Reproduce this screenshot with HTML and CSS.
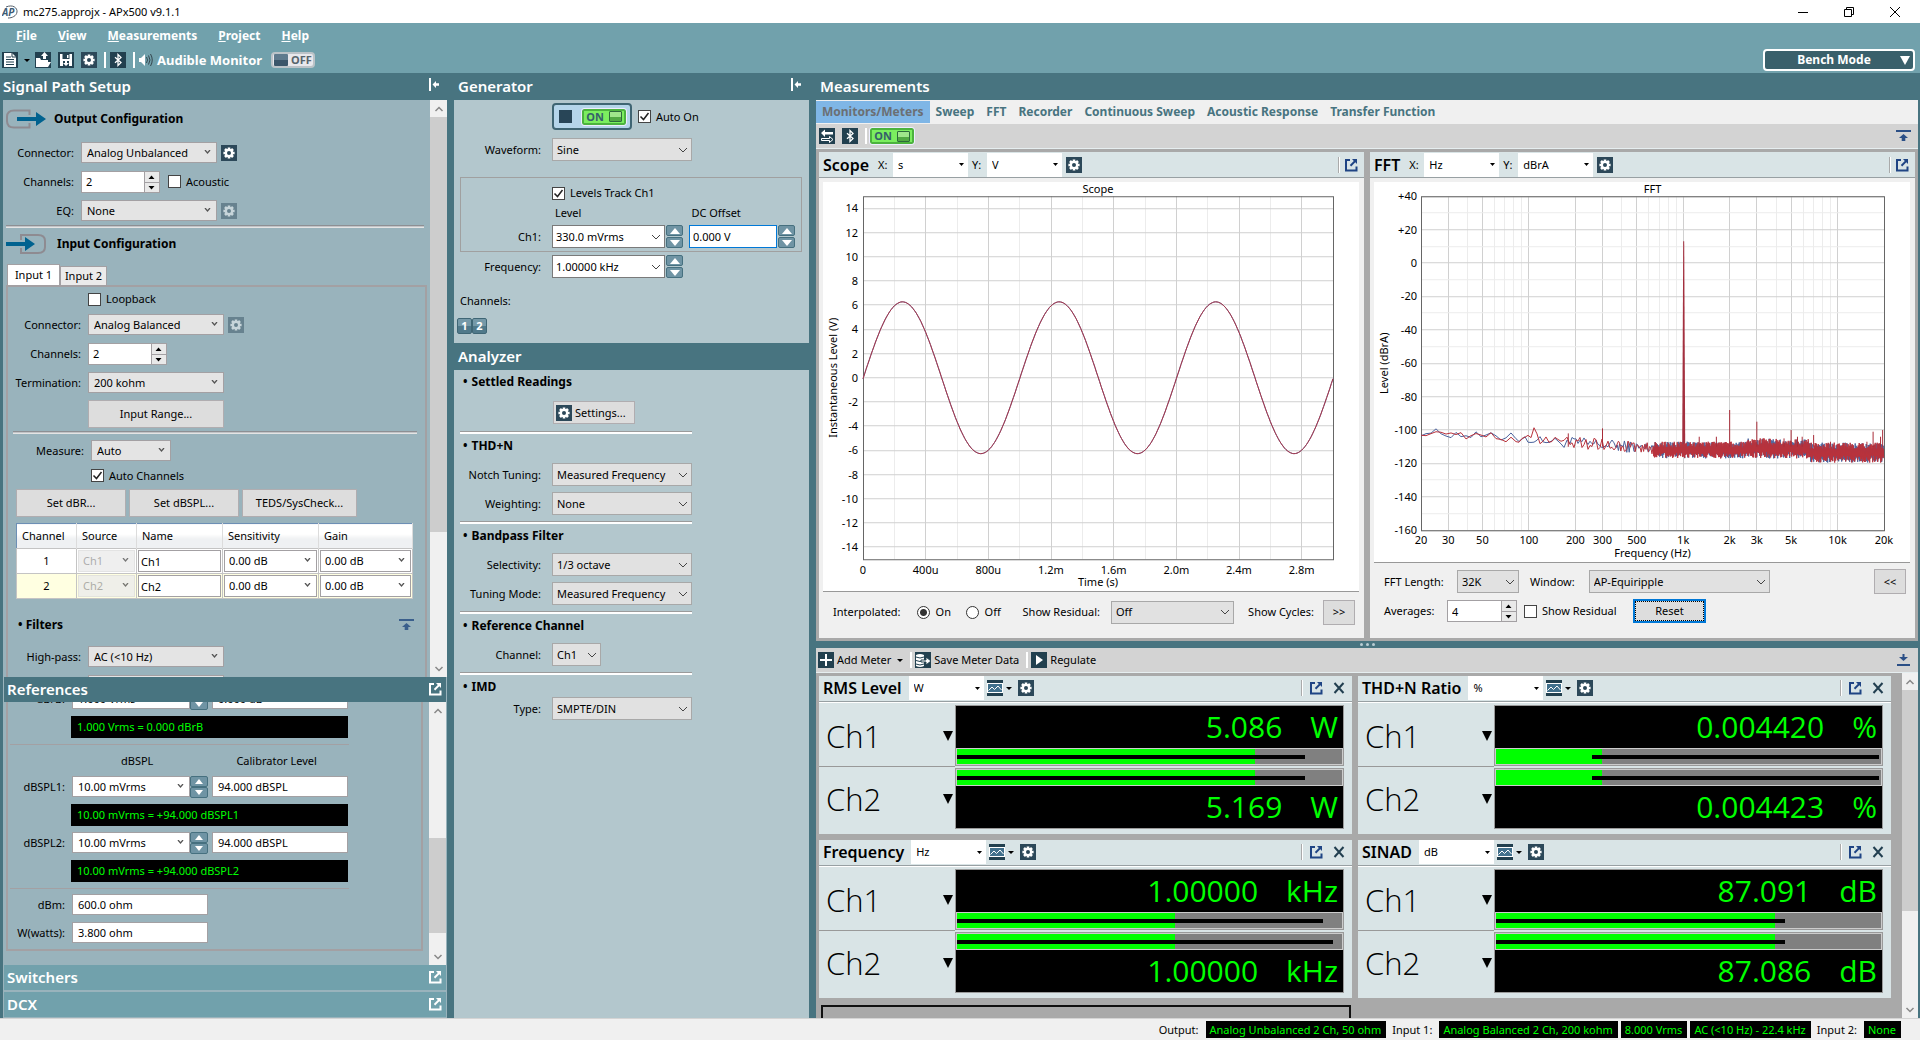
FILE: index.html
```html
<!DOCTYPE html>
<html lang="en">
<head>
<meta charset="utf-8">
<title>mc275.approjx - APx500 v9.1.1</title>
<link rel="stylesheet" href="styles.css">
</head>
<body>
<svg class="defs" aria-hidden="true">
  <symbol id="gear" viewBox="0 0 16 16"><rect width="16" height="16" fill="#2c4859"/><g stroke="#fff" stroke-width="2.6"><path d="M8 2.4v11.2M2.4 8h11.2M4 4l8 8M12 4l-8 8"/></g><circle cx="8" cy="8" r="4.2" fill="#fff"/><circle cx="8" cy="8" r="2" fill="#2c4859"/></symbol>
  <symbol id="bt" viewBox="0 0 16 16"><rect width="16" height="16" fill="#22404f"/><path d="M5 5.2l6 5.4L8 13.500V2.500l3 2.900L5 10.800" fill="none" stroke="#fff" stroke-width="1.300"/></symbol>
  <symbol id="pop" viewBox="0 0 14 14"><path d="M6 2H2v10.500h10.500V8.500" fill="none" stroke="currentColor" stroke-width="2"/><path d="M8 1h5v5l-1.700-1.700L7.200 8.400 5.800 7l4-4z" fill="currentColor"/></symbol>
  <symbol id="side" viewBox="0 0 12 14"><path d="M1 0h2v13H1zM4.500 6.500L8 3v2.300h3v2.500H8V10z" fill="currentColor"/></symbol>
  <symbol id="rollup" viewBox="0 0 16 14"><path d="M0 1h15v2H0zM7.500 5l4.500 4H9.300v3H5.700V9H3z" fill="currentColor"/></symbol>
  <symbol id="rolldown" viewBox="0 0 16 14"><path d="M1 11h13v2H1zM6.500 1h2v3H12l-4.500 4L3 4h3.500z" fill="currentColor"/></symbol>
  <symbol id="close" viewBox="0 0 12 12"><path d="M1.500 1l9 10M10.500 1l-9 10" stroke="#223f50" stroke-width="2"/></symbol>
  <symbol id="graph" viewBox="0 0 16 16"><rect width="16" height="16" fill="#22404f"/><rect x="0" y="3" width="16" height="10" fill="#fff"/><rect x="1" y="4" width="14" height="8" fill="#41708c"/><path d="M1.500 10.500l3.500-3.500 2.500 2.500L11 6l3.500 4" fill="none" stroke="#fff"/></symbol>
</svg>

<header class="titlebar">
  <svg class="logo" viewBox="0 0 16 16"><path d="M4 3C11 0 15.500 4 15 8s-5 6-9 6" fill="none" stroke="#56606a"/><text x="0" y="12" class="logo-text">AP</text></svg>
  <span class="grow">mc275.approjx - APx500 v9.1.1</span>
  <button class="win" aria-label="Minimize"><svg viewBox="0 0 12 12"><path d="M1 6.500h10" stroke="#000"/></svg></button>
  <button class="win" aria-label="Restore"><svg viewBox="0 0 12 12"><path d="M1.500 3.500h7v7h-7zM3.500 3.500v-2h7v7h-2" fill="none" stroke="#000"/></svg></button>
  <button class="win" aria-label="Close"><svg viewBox="0 0 12 12"><path d="M1 1l10 10M11 1L1 11" stroke="#000"/></svg></button>
</header>

<div class="topbar">
  <nav class="menu"><a href="#"><u>F</u>ile</a><a href="#"><u>V</u>iew</a><a href="#"><u>M</u>easurements</a><a href="#"><u>P</u>roject</a><a href="#"><u>H</u>elp</a></nav>
  <div class="toolbar">
    <button class="ic" aria-label="New"><svg viewBox="0 0 16 16"><path d="M0 0h16v16H0z" fill="#22404f"/><path d="M2 1h8l4 4v10H2z" fill="#fff"/><path d="M10 1v4h4" fill="none" stroke="#22404f"/><path d="M4 5h5M4 7.500h8M4 10h8M4 12.500h8" stroke="#22404f"/></svg></button>
    <i class="tri"></i>
    <button class="ic" aria-label="Open"><svg viewBox="0 0 16 16"><path d="M0 0h16v16H0z" fill="#22404f"/><path d="M1 15V6h4l1 2h7v2h3l-3 5z" fill="#fff"/><path d="M8 7V4H6l3.500-4L13 4h-2v3z" fill="#fff"/></svg></button>
    <button class="ic" aria-label="Save"><svg viewBox="0 0 16 16"><path d="M0 0h16v16H0z" fill="#22404f"/><path d="M2 2h12v12H2z" fill="#fff"/><path d="M4.500 2h7v5h-7zM5 9h6v5H5z" fill="#22404f"/><path d="M9 3h1.500v3H9zM7 8h2v3h2l-3 3-3-3h2z" fill="#fff"/></svg></button>
    <button class="ic" aria-label="Settings"><svg><use href="#gear"/></svg></button>
    <i class="sep"></i>
    <button class="ic" aria-label="Bluetooth"><svg><use href="#bt"/></svg></button>
    <i class="sep"></i>
    <svg class="speaker" viewBox="0 0 14 14"><path d="M0 5h2l4-4v12L2 9H0z" fill="#fff"/><path d="M7.500 4q2 3 0 6M9.500 2.500q3 4.500 0 9M11.500 1q3.500 6 0 12" fill="none" stroke="#35464e"/></svg>
    <b class="audible">Audible Monitor</b>
    <button class="switch off"><i></i>OFF</button>
    <button class="bench"><span>Bench Mode</span><i></i></button>
  </div>
</div>

<main class="cols">
  <section class="col left">
    <h2 class="bar">Signal Path Setup<svg class="sideicon"><use href="#side"/></svg></h2>
    <div class="scroller path">
      <div class="content">
        <h3 class="cfg"><svg viewBox="0 0 40 20"><path d="M23.500 6V1.500H8Q1 1.500 1 8v4q0 6.500 7 6.500h15.500V14" fill="none" stroke="#8e8b91" stroke-width="2"/><path d="M11 8h19V3l10 7-10 7v-5H11z" fill="#00628f"/></svg>Output Configuration</h3>
        <div class="rows out">
          <label for="oc">Connector:</label><div class="r"><select id="oc" class="w136"><option>Analog Unbalanced</option></select><button class="ic" aria-label="Settings"><svg><use href="#gear"/></svg></button></div>
          <label for="och">Channels:</label><div class="r"><span class="num"><input id="och" value="2"><i class="ud"></i></span><input type="checkbox" id="ac"><label for="ac">Acoustic</label></div>
          <label for="eq">EQ:</label><div class="r"><select id="eq" class="w136"><option>None</option></select><button class="ic dim" aria-label="EQ settings" disabled><svg><use href="#gear"/></svg></button></div>
        </div>
        <hr class="rule">
        <h3 class="cfg in"><svg viewBox="0 0 40 20"><path d="M15 6V1h17q7 0 7 6v6q0 6-7 6H15v-5" fill="none" stroke="#8e8b91" stroke-width="2"/><path d="M0 8h19V3l10 7-10 7v-5H0z" fill="#00628f"/></svg>Input Configuration</h3>
        <div class="tabs"><button class="on">Input 1</button><button>Input 2</button></div>
        <div class="tabbox">
          <div class="rows inp">
            <span class="short"></span><div class="r short"><input type="checkbox" id="lb"><label for="lb">Loopback</label></div>
            <label for="ic">Connector:</label><div class="r"><select id="ic" class="w136"><option>Analog Balanced</option></select><button class="ic dim" aria-label="Input settings" disabled><svg><use href="#gear"/></svg></button></div>
            <label for="ich">Channels:</label><div class="r"><span class="num"><input id="ich" value="2"><i class="ud"></i></span></div>
            <label for="te">Termination:</label><div class="r"><select id="te" class="w136"><option>200 kohm</option></select></div>
            <span></span><button class="btn w136">Input Range...</button>
          </div>
          <hr class="rule inner">
          <div class="rows inp meas">
            <label for="me">Measure:</label><div class="r"><select id="me" class="w80"><option>Auto</option></select></div>
            <span></span><div class="r"><input type="checkbox" id="auc" checked><label for="auc">Auto Channels</label></div>
          </div>
          <div class="btns"><button class="btn">Set dBR...</button><button class="btn">Set dBSPL...</button><button class="btn">TEDS/SysCheck...</button></div>
          <table class="chan">
            <thead><tr><th>Channel</th><th>Source</th><th>Name</th><th>Sensitivity</th><th>Gain</th></tr></thead>
            <tbody>
              <tr><td>1</td><td><select disabled aria-label="Source 1"><option>Ch1</option></select></td><td><input aria-label="Name 1" value="Ch1"></td><td><select aria-label="Sensitivity 1"><option>0.00 dB</option></select></td><td><select aria-label="Gain 1"><option>0.00 dB</option></select></td></tr>
              <tr class="sel"><td>2</td><td><select disabled aria-label="Source 2"><option>Ch2</option></select></td><td><input aria-label="Name 2" value="Ch2"></td><td><select aria-label="Sensitivity 2"><option>0.00 dB</option></select></td><td><select aria-label="Gain 2"><option>0.00 dB</option></select></td></tr>
            </tbody>
          </table>
          <h4 class="filters">• Filters<svg><use href="#rollup"/></svg></h4>
          <div class="rows inp">
            <label for="hp">High-pass:</label><div class="r"><select id="hp" class="w136"><option>AC (&lt;10 Hz)</option></select></div>
            <span></span><div class="r"><select class="w136" aria-label="Low-pass"></select></div>
          </div>
        </div>
      </div>
      <div class="sb"><i class="up"></i><b class="thumb t1"></b><i class="down"></i></div>
    </div>
    <h2 class="bar sub">References<svg><use href="#pop"/></svg></h2>
    <div class="scroller refs">
      <div class="content">
        <div class="refbox">
          <div class="rrow"><label for="rb">dBrB:</label><select id="rb"><option>1.000 Vrms</option></select><span class="spin"><button aria-label="Up"></button><button aria-label="Down"></button></span><input aria-label="dBrB offset" value="0.000 dB"></div>
          <output class="led">1.000 Vrms = 0.000 dBrB</output>
          <hr>
          <div class="rhead"><span>dBSPL</span><span>Calibrator Level</span></div>
          <div class="rrow"><label for="s1">dBSPL1:</label><select id="s1"><option>10.00 mVrms</option></select><span class="spin"><button aria-label="Up"></button><button aria-label="Down"></button></span><input aria-label="Calibrator level 1" value="94.000 dBSPL"></div>
          <output class="led">10.00 mVrms = +94.000 dBSPL1</output>
          <div class="rrow"><label for="s2">dBSPL2:</label><select id="s2"><option>10.00 mVrms</option></select><span class="spin"><button aria-label="Up"></button><button aria-label="Down"></button></span><input aria-label="Calibrator level 2" value="94.000 dBSPL"></div>
          <output class="led">10.00 mVrms = +94.000 dBSPL2</output>
          <hr>
          <div class="rrow"><label for="dbm">dBm:</label><input id="dbm" value="600.0 ohm"></div>
          <div class="rrow last"><label for="wat">W(watts):</label><input id="wat" value="3.800 ohm"></div>
        </div>
      </div>
      <div class="sb"><i class="up"></i><b class="thumb t2"></b><i class="down"></i></div>
    </div>
    <h2 class="bar sub light">Switchers<svg><use href="#pop"/></svg></h2>
    <h2 class="bar sub light dcx">DCX<svg><use href="#pop"/></svg></h2>
  </section>

  <section class="col mid">
    <h2 class="bar">Generator<svg class="sideicon"><use href="#side"/></svg></h2>
    <div class="gen">
      <div class="g onrow"><span></span><div class="r"><button class="gon" aria-label="Generator on"><i class="stop"></i><span class="switch"><span>ON</span><i></i></span></button><input type="checkbox" id="ao" checked><label for="ao">Auto On</label></div></div>
      <div class="g"><label for="wf">Waveform:</label><select id="wf" class="win"><option>Sine</option></select></div>
      <div class="levels">
        <div class="g chk"><span></span><div class="r"><input type="checkbox" id="lt" checked><label for="lt">Levels Track Ch1</label></div></div>
        <div class="g heads"><span></span><div><label for="lv">Level</label><label for="dc">DC Offset</label></div></div>
        <div class="g"><label for="lv">Ch1:</label><div class="r tight"><select id="lv" class="edit"><option>330.0 mVrms</option></select><span class="spin"><button aria-label="Up"></button><button aria-label="Down"></button></span><input id="dc" class="dc" value="0.000 V"><span class="spin"><button aria-label="Up"></button><button aria-label="Down"></button></span></div></div>
      </div>
      <div class="g"><label for="fr">Frequency:</label><div class="r tight"><select id="fr" class="edit"><option>1.00000 kHz</option></select><span class="spin"><button aria-label="Up"></button><button aria-label="Down"></button></span></div></div>
      <p class="chl">Channels:</p>
      <div class="chb"><button>1</button><button>2</button></div>
    </div>
    <h2 class="bar">Analyzer</h2>
    <div class="ana">
      <section><h4><i>•</i>Settled Readings</h4><div class="g set"><span></span><button class="btn settings"><svg><use href="#gear"/></svg>Settings...</button></div></section>
      <section><h4><i>•</i>THD+N</h4><div class="g"><label for="nt">Notch Tuning:</label><select id="nt" class="win"><option>Measured Frequency</option></select></div><div class="g"><label for="wt">Weighting:</label><select id="wt" class="win"><option>None</option></select></div></section>
      <section><h4><i>•</i>Bandpass Filter</h4><div class="g"><label for="se">Selectivity:</label><select id="se" class="win"><option>1/3 octave</option></select></div><div class="g"><label for="tm">Tuning Mode:</label><select id="tm" class="win"><option>Measured Frequency</option></select></div></section>
      <section><h4><i>•</i>Reference Channel</h4><div class="g"><label for="rc">Channel:</label><select id="rc" class="win w49"><option>Ch1</option></select></div></section>
      <section class="imd"><h4><i>•</i>IMD</h4><div class="g"><label for="ty">Type:</label><select id="ty" class="win"><option>SMPTE/DIN</option></select></div></section>
    </div>
  </section>

  <section class="col right">
    <h2 class="bar">Measurements</h2>
    <nav class="mtabs"><a href="#" class="on">Monitors/Meters</a><a href="#">Sweep</a><a href="#">FFT</a><a href="#">Recorder</a><a href="#">Continuous Sweep</a><a href="#">Acoustic Response</a><a href="#">Transfer Function</a></nav>
    <div class="mtool">
      <button class="ic" aria-label="Swap"><svg viewBox="0 0 16 16"><path d="M0 0h16v16H0z" fill="#22404f"/><path d="M2 5l4-3.500V4h8v2.500H6V9z" fill="#fff"/><path d="M2.500 10.500h8v-2L14 11.500l-3.500 3v-2h-8z" fill="none" stroke="#fff"/></svg></button>
      <button class="ic" aria-label="Bluetooth"><svg><use href="#bt"/></svg></button>
      <i class="sep"></i>
      <button class="switch"><span>ON</span><i></i></button>
      <svg class="roll"><use href="#rollup"/></svg>
    </div>
    <div class="charts">
      <article class="pane">
        <header><h3>Scope</h3><label for="sx">X:</label><select id="sx" class="flat"><option>s</option></select><label for="sy">Y:</label><select id="sy" class="flat"><option>V</option></select><button class="ic" aria-label="Settings"><svg><use href="#gear"/></svg></button><span class="grow"></span><i class="sep"></i><svg class="popi"><use href="#pop"/></svg></header>
        <div class="plot" id="scope"></div>
        <div class="ctl scopectl">
          <span>Interpolated:</span><input type="radio" name="ip" id="ip1" checked><label for="ip1">On</label><input type="radio" name="ip" id="ip2"><label for="ip2">Off</label>
          <label for="sr" class="srl">Show Residual:</label><select id="sr" class="win"><option>Off</option></select><span class="scl">Show Cycles:</span><button class="btn sq">&gt;&gt;</button>
        </div>
      </article>
      <article class="pane">
        <header><h3>FFT</h3><label for="fx">X:</label><select id="fx" class="flat"><option>Hz</option></select><label for="fy">Y:</label><select id="fy" class="flat"><option>dBrA</option></select><button class="ic" aria-label="Settings"><svg><use href="#gear"/></svg></button><span class="grow"></span><i class="sep"></i><svg class="popi"><use href="#pop"/></svg></header>
        <div class="plot" id="fft"></div>
        <div class="ctl fftctl">
          <div class="r"><label for="fl">FFT Length:</label><select id="fl" class="win w62"><option>32K</option></select><label for="wd" class="wdl">Window:</label><select id="wd" class="win w181"><option>AP-Equiripple</option></select><span class="grow"></span><button class="btn sq">&lt;&lt;</button></div>
          <div class="r"><label for="av">Averages:</label><span class="num avn"><input id="av" value="4"><i class="ud"></i></span><input type="checkbox" id="rs"><label for="rs" class="rsl">Show Residual</label><button class="btn reset">Reset</button></div>
        </div>
      </article>
    </div>
    <div class="split"><i></i><i></i><i></i></div>
    <div class="mtool meters-tool">
      <button class="tb"><svg viewBox="0 0 16 16"><path d="M0 0h16v16H0z" fill="#22404f"/><path d="M8 2v12M2 8h12" stroke="#fff" stroke-width="2"/></svg>Add Meter<i class="tri"></i></button>
      <i class="sep"></i>
      <button class="tb"><svg viewBox="0 0 16 16"><path d="M0 0h16v16H0z" fill="#22404f"/><path d="M1 3q4-2 8 0v11q-4 2-8 0z" fill="#fff"/><path d="M1 5q4 2 8 0M1 8.500q4 2 8 0M1 12q4 2 8 0" fill="none" stroke="#22404f"/><path d="M6 8h5V5l5 4-5 4v-3H6z" fill="#fff" stroke="#22404f"/></svg>Save Meter Data</button>
      <i class="sep"></i>
      <button class="tb"><svg viewBox="0 0 16 16"><path d="M0 0h16v16H0z" fill="#22404f"/><path d="M5 3l7 5-7 5z" fill="#fff"/></svg>Regulate</button>
      <svg class="roll"><use href="#rolldown"/></svg>
    </div>
    <div class="mwrap">
      <div class="meters" id="meters"></div>
      <div class="sb msb"><i class="up"></i><b class="thumb t3"></b><i class="down"></i></div>
    </div>
  </section>
</main>

<footer class="status"><span>Output:</span><b>Analog Unbalanced 2 Ch, 50 ohm</b><span>Input 1:</span><b>Analog Balanced 2 Ch, 200 kohm</b><b>8.000 Vrms</b><b>AC (&lt;10 Hz) - 22.4 kHz</b><span>Input 2:</span><b>None</b></footer>
<script src="app.js"></script>
</body>
</html>
```

FILE: styles.css
```css
* { box-sizing: border-box; }
:root { --dark: #487480; --teal: #71a1ac; --pale: #99b3bc; --mist: #b3c7cd; --ink: #22404f; --line: #a3a0a3; }
html { height: 100%; overflow: hidden; }
body, button, input, select { font-family: "Noto Sans", "Open Sans", sans-serif; font-size: 11px; line-height: 16px; color: #000; }
body { margin: 0; height: 100vh; display: flex; flex-direction: column; overflow: hidden; background: var(--dark); }
button, input, select { margin: 0; padding: 0; border: 0; border-radius: 0; outline: 0; }
h2, h3, h4, p, hr { margin: 0; }
a { color: inherit; text-decoration: none; }
i { font-style: normal; flex: none; }
svg { display: block; flex: none; }
.defs { position: absolute; width: 0; height: 0; }
.grow { flex: 1; }
.r { display: flex; align-items: center; }

/* title bar and menus */
.titlebar { height: 23px; flex: none; background: #fff; display: flex; align-items: center; padding: 0 5px 0 2px; gap: 5px; }
.logo { width: 16px; height: 16px; }
.logo-text { font: italic bold 10px "Noto Sans", sans-serif; fill: #3d5b74; }
.win svg { width: 12px; height: 12px; margin: auto; }
.titlebar .win { width: 41px; height: 22px; background: none; }
.topbar { height: 50px; flex: none; background: var(--teal); color: #fff; }
.menu { display: flex; gap: 21px; padding: 3px 16px 1px; font-weight: 700; font-size: 12px; line-height: 20px; }
.toolbar { display: flex; align-items: center; height: 26px; padding: 0 5px 0 2px; gap: 7px; }
.ic { width: 16px; height: 16px; background: none; flex: none; }
.ic svg { width: 16px; height: 16px; }
.dim { opacity: .45; }
.tri { border: 3px solid transparent; border-top: 3px solid #000; border-bottom: 0; width: 0; }
.toolbar .tri { margin: 0 -2px 0 -1px; }
.sep { width: 2px; height: 16px; background: #fff; }
.toolbar .sep { margin-right: -3px; }
.speaker { width: 14px; height: 14px; }
.audible { font-size: 13px; margin-left: -3px; margin-right: 2px; }
.switch { display: flex; align-items: center; justify-content: space-around; width: 44px; height: 16px; border: 2px solid #4cb33e; border-radius: 2px; background: #7bee5f; font-weight: 700; color: #35606b; line-height: 12px; outline: 1px solid #eef; }
.switch i { width: 13px; height: 11px; border: 1px solid #2d6a3c; background: linear-gradient(#9fe68b 50%, #51a943 50%); border-radius: 1px; }
.switch.off { background: #e8e8ec; border-color: #bbc3c8; color: #56646c; border-radius: 4px; outline: 0; }
.switch.off i { background: linear-gradient(#5f7b8e 50%, #3b566a 50%); border: 0; width: 14px; height: 12px; }
.bench { margin: 0 0 0 auto; width: 152px; height: 22px; border: 2px solid #fff; border-radius: 4px; background: #3a606b; color: #fff; font-weight: 700; display: flex; align-items: center; padding: 0 3px; }
.bench span { flex: 1; font-size: 12px; }
.bench i { border: 5px solid transparent; border-top: 9px solid #fff; border-bottom: 0; }

.cols { flex: 1; min-height: 0; display: grid; grid-template-rows: minmax(0, 1fr); grid-template-columns: 444px 355px minmax(0, 1fr); gap: 7px; padding: 0 2px 0 3px; }
.col { display: flex; flex-direction: column; min-height: 0; }
.bar { display: flex; align-items: center; justify-content: space-between; height: 27px; flex: none; color: #fff; font-size: 15px; line-height: 20px; font-weight: 600; padding-bottom: 2px; }
.sideicon { width: 12px; height: 14px; margin: 0 7px 2px 0; }
.mid .bar, .right .bar { padding-left: 4px; }
.bar.sub { height: 25px; margin: 0 1px 0 1px; padding: 0 4px 1px 3px; background: var(--dark); }
.bar.sub svg { width: 14px; height: 14px; }
.bar.sub.light { background: var(--teal); }
.bar.sub.dcx { margin: 2px 1px 1px; }
.left { background: var(--pale); }
.left > .bar:first-child { background: var(--dark); }

/* form controls */
select { appearance: none; height: 21px; padding: 0 18px 0 5px; border: 1px solid var(--line); background: #e4e4e4 url("data:image/svg+xml,%3Csvg xmlns='http://www.w3.org/2000/svg' width='8' height='5'%3E%3Cpath d='M1 0l2.500 3L6 0' fill='none' stroke='%23555' stroke-width='1.300'/%3E%3C/svg%3E") no-repeat right 4px top 7px; }
select.win { height: 23px; width: 140px; padding-left: 4px; border-color: #a8a8a8; background: #e1e1e1 url("data:image/svg+xml,%3Csvg xmlns='http://www.w3.org/2000/svg' width='10' height='6'%3E%3Cpath d='M1 1l4 4 4-4' fill='none' stroke='%23444'/%3E%3C/svg%3E") no-repeat right 3px center; }
select.edit { height: 23px; width: 113px; padding-left: 3px; border-color: #7a7a7a; background: #fff url("data:image/svg+xml,%3Csvg xmlns='http://www.w3.org/2000/svg' width='10' height='6'%3E%3Cpath d='M1 1l4 4 4-4' fill='none' stroke='%23444'/%3E%3C/svg%3E") no-repeat right 3px center; }
select.flat { height: 24px; width: 75px; border: 0; padding-left: 5px; background: #fff url("data:image/svg+xml,%3Csvg xmlns='http://www.w3.org/2000/svg' width='5' height='3'%3E%3Cpath d='M0 0h5L2.500 3z'/%3E%3C/svg%3E") no-repeat right 4px center; }
select.w136 { width: 136px; }
.w136 { width: 136px; }
select.w80 { width: 80px; }
select.w49 { width: 49px; }
select.w62 { width: 62px; }
select.w181 { width: 181px; }
input { height: 21px; padding: 0 5px; border: 1px solid var(--line); background: #fff; }
input[type=checkbox] { appearance: none; width: 13px; height: 13px; padding: 0; border: 1px solid #444; flex: none; }
input[type=checkbox]:checked { background: #fff url("data:image/svg+xml,%3Csvg xmlns='http://www.w3.org/2000/svg' width='11' height='11'%3E%3Cpath d='M1.500 5.500l3 3 5-6.500' fill='none' stroke='%23222' stroke-width='1.500'/%3E%3C/svg%3E") center no-repeat; }
input[type=radio] { appearance: none; width: 13px; height: 13px; padding: 0; border: 1px solid #333; border-radius: 50%; flex: none; }
input[type=radio]:checked { background: radial-gradient(circle, #333 3px, #fff 4px); }
.btn { height: 28px; border: 1px solid #b0adb0; background: #dddddd; }
.num { display: flex; width: 79px; height: 22px; border: 1px solid var(--line); background: #fff; }
.num input { border: 0; flex: 1; min-width: 0; height: 20px; padding: 0 4px; }
.ud { width: 15px; background: #e9e9e9 url("data:image/svg+xml,%3Csvg xmlns='http://www.w3.org/2000/svg' width='15' height='20'%3E%3Cpath d='M4.500 7h6l-3-3.500zM4.500 14h6l-3 3.500z'/%3E%3Cpath d='M0 10.500h15M.5 0v20' stroke='%23a3a0a3'/%3E%3C/svg%3E") no-repeat; }
.spin { display: flex; flex-direction: column; width: 17px; height: 23px; gap: 1px; flex: none; }
.spin button { flex: 1; border: 1px solid #46707f; border-radius: 2px; background: #6f94a4 url("data:image/svg+xml,%3Csvg xmlns='http://www.w3.org/2000/svg' width='10' height='6'%3E%3Cpath d='M0 6h10L5 0z' fill='%23fff'/%3E%3C/svg%3E") center no-repeat; }
.spin button + button { background-image: url("data:image/svg+xml,%3Csvg xmlns='http://www.w3.org/2000/svg' width='10' height='6'%3E%3Cpath d='M0 0h10L5 6z' fill='%23fff'/%3E%3C/svg%3E"); }
.refs .spin { height: 22px; gap: 0; }
.refs .spin button { background-size: 8px 5px; }

/* scroll areas */
.scroller { display: flex; min-height: 0; }
.scroller .content { flex: 1; min-width: 0; overflow: hidden; }
.path { flex: 577 1 0; }
.refs { flex: 263 1 0; padding-right: 1px; }
.sb { width: 17px; flex: none; background: #f0f0f0; display: flex; flex-direction: column; }
.sb i { height: 17px; background: url("data:image/svg+xml,%3Csvg xmlns='http://www.w3.org/2000/svg' width='10' height='6'%3E%3Cpath d='M1.500 5L5 1.500 8.500 5' fill='none' stroke='%23888' stroke-width='1.500'/%3E%3C/svg%3E") center no-repeat; }
.sb .down { margin-top: auto; background-image: url("data:image/svg+xml,%3Csvg xmlns='http://www.w3.org/2000/svg' width='10' height='6'%3E%3Cpath d='M1.500 1L5 4.500 8.500 1' fill='none' stroke='%23888' stroke-width='1.500'/%3E%3C/svg%3E"); }
.thumb { background: #cdcdcd; width: 100%; }
.t1 { height: 72%; }
.t2 { height: 36%; margin-top: 119px; }
.t3 { height: 64%; }

/* signal path */
.cfg { display: flex; align-items: flex-start; gap: 8px; padding: 9px 0 0 3px; font-size: 12px; height: 38px; line-height: 20px; }
.cfg svg { width: 40px; height: 20px; }
.cfg.in { height: 36px; padding-top: 6px; gap: 11px; }
.rows { display: grid; grid-template-columns: 71px auto; justify-content: start; column-gap: 7px; row-gap: 8px; align-items: center; }
.rows > * { height: 21px; }
.rows > label { text-align: right; line-height: 21px; }
.out { padding-top: 4px; }
.out .ic, .inp .ic { margin-left: 4px; }
.out input[type=checkbox] { margin-left: 8px; }
input[type=checkbox] + label { margin-left: 5px; }
.rule { height: 3px; border: 0; border-top: 1px solid #8d8f93; border-bottom: 1px solid #e4e4e4; background: #c2c4c7; margin: 4px 6px 0 3px; }
.tabs { display: flex; align-items: flex-end; padding-left: 4px; height: 21px; }
.tabs button { height: 19px; width: 47px; background: #ebebeb; border: 1px solid var(--line); border-bottom: 0; }
.tabs .on { height: 21px; width: 53px; background: #fff; }
.tabbox { margin: 0 3px 0 3px; border: 2px solid var(--line); border-bottom: 0; height: 420px; }
.rows.inp { grid-template-columns: 73px auto; padding-top: 5px; }
.inp > .btn { height: 28px; margin-top: -1px; }
.inp > .short { height: 14px; }
.rule.inner { margin: 3px 8px 0 5px; }
.rows.meas { grid-template-columns: 76px auto; padding-top: 6px; row-gap: 4px; }
.btns { display: flex; gap: 3px; padding: 3px 0 0 8px; }
.btns .btn { width: 110px; }
.btns .btn:last-child { width: 115px; }
.chan { margin: 6px 0 0 8px; width: 397px; table-layout: fixed; border-collapse: collapse; border: 1px solid #6d8fb5; border-right: 0; background: #fff; }
.chan th { height: 25px; font-weight: 400; text-align: left; padding: 0 0 0 5px; background: linear-gradient(#fff 40%, #eff1f3 60%); border-right: 1px solid #dcdcdc; }
.chan th:nth-child(-n+2) { width: 60px; }
.chan th:nth-child(3) { width: 86px; }
.chan th:nth-child(4) { width: 96px; }
.chan td { height: 25px; padding: 1px; border: 1px solid #c4c4c4; }
.chan td:first-child { text-align: center; }
.chan select, .chan input { display: block; width: 100%; height: 22px; padding-left: 4px; background-color: #fff; }
.chan input { padding-left: 2px; }
.chan select:disabled { background-color: #ececec; color: #999; opacity: .8; border-color: #ddd; }
.chan .sel { background: #ffffe1; }
.filters { display: flex; justify-content: space-between; align-items: center; padding: 0 10px 0 10px; font-size: 12px; height: 20px; margin: 16px 0 6px; }
.filters svg { width: 16px; height: 14px; color: #3a5f8c; }

/* references */
.refs .content { display: flex; flex-direction: column; justify-content: flex-end; padding: 0 6px 14px 3px; }
.refbox { border: 2px solid var(--line); border-top: 0; padding: 0 0 6px 2px; flex: none; }
.rrow { display: flex; align-items: center; height: 21px; margin-bottom: 7px; }
.rrow label { width: 55px; text-align: right; margin-right: 7px; }
.rrow select { width: 118px; background-color: #fff; }
.rrow input { width: 136px; }
.rrow .spin { margin: 0 4px 0 0; width: 18px; }
.rrow.last { margin-bottom: 0; }
.led { display: block; margin: 0 0 6px 61px; width: 277px; height: 22px; padding-left: 6px; background: #000; color: #0f0; line-height: 22px; }
.refbox hr { border: 0; border-top: 1px solid var(--line); width: 339px; margin: 5px 0 5px 0; }
.rhead { display: flex; padding: 3px 0 7px 111px; gap: 83px; height: 26px; }

/* generator and analyzer */
.gen, .ana { background: var(--mist); padding-left: 6px; }
.gen { height: 243px; padding-top: 3px; flex: none; }
.ana { flex: 1; padding-top: 2px; min-height: 0; }
.g { display: grid; grid-template-columns: 81px auto; column-gap: 11px; align-items: center; justify-content: start; }
.g > label { text-align: right; }
.onrow { margin-bottom: 8px; }
.gon { width: 80px; height: 27px; border: 2px solid #3f6573; border-radius: 4px; background: #b5d5ea; display: flex; align-items: center; gap: 10px; padding-left: 5px; margin-right: 6px; }
.stop { width: 13px; height: 13px; background: #284557; }
.levels { border: 1px solid #a0a0a0; margin: 16px 7px 3px 0; height: 75px; padding-top: 7px; }
.levels .g { grid-template-columns: 80px auto; }
.heads { height: 24px; }
.heads label { display: inline-block; margin-left: 3px; }
.heads label + label { margin-left: 110px; }
.tight { gap: 1px; }
.dc { width: 88px; height: 23px; padding: 0 3px; border-color: #0078d7; margin-left: 5px; }
.chl { margin-top: 15px; }
.chb { display: flex; margin: 9px 0 0 -3px; }
.chb button { width: 15px; height: 16px; border: 1px solid #3f6675; border-radius: 2px; background: linear-gradient(#7599a8 50%, #50798a 50%); color: #fff; font-weight: 700; line-height: 12px; }
.ana section { padding-bottom: 6px; }
.ana section + section { border-top: 1px solid #9b9b9b; box-shadow: inset 0 2px #fff; width: 232px; padding-top: 4px; }
.ana h4 { font-size: 12px; height: 20px; line-height: 20px; padding-left: 3px; margin-bottom: 7px; }
.ana h4 i { margin-right: 4px; }
.ana .g + .g { margin-top: 6px; }
.ana .imd h4 { margin-bottom: 0; }
.settings { display: flex; align-items: center; gap: 3px; height: 23px; width: 82px; padding-left: 2px; margin: 2px 0 1px 1px; }
.settings svg { width: 16px; height: 16px; }

/* measurements */
.mtabs { display: flex; height: 24px; background: #f0f0f0; color: #487480; font-weight: 700; font-size: 12px; line-height: 22px; flex: none; }
.mtabs a { padding: 0 6px; height: 22px; margin-top: 1px; }
.mtabs .on { background: #7fb6e6; color: #6b6f73; }
.mtool { height: 25px; flex: none; display: flex; align-items: center; gap: 7px; padding: 0 6px 0 3px; background: #d3d3d3; border-bottom: 1px solid #e6eef0; }
.mtool .sep { margin-right: -4px; }
.roll { width: 16px; height: 14px; color: #2b4f86; margin-left: auto; }
.charts { flex: 490 1 0; min-height: 0; background: #a9a9a9; padding: 3px; display: grid; grid-template-rows: minmax(0, 1fr); grid-template-columns: repeat(2, minmax(0, 1fr)); gap: 6px; }
.pane { background: #f0f0f0; display: flex; flex-direction: column; min-height: 0; min-width: 0; }
.pane header { display: flex; align-items: center; height: 26px; background: #d9e4e6; border-bottom: 1px solid #98a0a3; padding: 0 6px 0 4px; gap: 4px; flex: none; }
.pane header label { width: 11px; }
.pane h3 { font-size: 16px; font-weight: 600; margin-right: 5px; }
.pane header .sep, .meter header .sep { border-left: 1px solid #aaa; background: #fff; }
.popi { width: 14px; height: 14px; color: #1f4484; }
.plot { flex: 1; min-height: 0; margin: 4px 5px 0 4px; background: #fff; border-bottom: 1px solid #989898; overflow: hidden; }
.plot svg { width: 100%; height: 100%; }
.plot text { font-size: 11px; }
.ctl { flex: none; }
.scopectl { height: 46px; display: flex; align-items: center; padding: 0 9px 6px 14px; }
.scopectl input { margin-left: 16px; margin-right: 6px; }
.scopectl label + input { margin-left: 6px; }
.scopectl input + label { width: 24px; }
.srl { margin: 0 11px 0 14px; }
.scopectl select.win { width: 123px; }
.scl { margin-left: auto; margin-right: 9px; }
.sq { width: 32px; height: 25px; }
.fftctl { height: 75px; padding: 6px 9px 0 14px; }
.fftctl .r + .r { margin-top: 5px; height: 24px; }
.fftctl .r > label:first-child { width: 73px; }
.fftctl .r + .r > label:first-child { width: 63px; }
.wdl { margin: 0 14px 0 11px; }
.avn { width: 70px; margin-right: 7px; }
.rsl { width: 91px; }
.reset { width: 73px; height: 24px; border: 2px solid #0078d7; outline: 1px dotted #000; outline-offset: -3px; }
.split { height: 7px; flex: none; display: flex; justify-content: center; align-items: center; gap: 3px; }
.split i { width: 3px; height: 3px; border-radius: 50%; background: #b9cdd3; }
.tb { display: flex; align-items: center; background: none; gap: 3px; }
.tb svg { width: 16px; height: 16px; }
.tb .tri { margin-left: 3px; }
.meters-tool { padding-left: 2px; }
.mwrap { flex: 347 1 0; min-height: 0; display: flex; background: #a9a9a9; }
.meters { flex: 1; min-width: 0; overflow: hidden; padding: 3px 11px 0 3px; display: grid; grid-template-columns: repeat(2, minmax(0, 1fr)); gap: 6px; align-content: start; }
.msb { width: 16px; }
.meter { background: #d9e4e6; height: 158px; }
.meter header { display: flex; align-items: center; height: 27px; padding: 0 7px 2px 4px; border-bottom: 1px solid #fff; box-shadow: inset 0 -1px #98a0a3; }
.meter h3 { font-size: 16px; font-weight: 600; margin-right: 7px; }
.meter header .ic { margin-left: 3px; }
.meter header .tri { margin: 0 3px; }
.meter .popi { margin: 0 10px 0 6px; }
.meter .x { width: 12px; height: 12px; }
.ch { display: flex; height: 63px; padding: 2px 8px 0 0; }
.ch .name { width: 136px; display: flex; align-items: center; justify-content: space-between; padding: 0 2px 0 7px; font: 300 31px/40px "Open Sans", sans-serif; }
.ch:nth-child(2) .name { box-shadow: 0 1px #999; }
.ch .name i { border: 5px solid transparent; border-top: 10px solid #000; border-bottom: 0; }
.disp { flex: 1; min-width: 0; display: flex; flex-direction: column; background: #000; border: 1px solid #999; }
.ch + .ch .disp { flex-direction: column-reverse; }
.val { flex: 1; display: flex; justify-content: flex-end; gap: 28px; padding-right: 5px; color: #0f0; font: 400 30px/42px "Open Sans", sans-serif; height: 42px; }
.track { height: 17px; background: #808080; border: 1px solid #ccc; position: relative; }
.fill { position: absolute; left: 0; top: 0; bottom: 0; background: #0f0; }
.range { position: absolute; top: 6px; height: 4px; background: #000; }
.drop { border: 2px solid #111; border-bottom: 0; height: 30px; margin: 1px 1px 0 2px; }

.status { height: 22px; flex: none; background: #f0f0f0; border-top: 1px solid #d4d4d4; display: flex; justify-content: flex-end; align-items: center; padding-right: 19px; gap: 3px; }
.status b { font-weight: 400; color: #0f0; background: #000; height: 17px; padding: 0 5px 0 4px; line-height: 17px; }
.status span { margin: 0 4px 0 3px; }
```

FILE: app.js
```js
const line = (x1, y1, x2, y2, c) => `<path d="M${x1} ${y1}L${x2} ${y2}" stroke="${c}"/>`;
const text = (x, y, s, a = 'middle', extra = '') => `<text x="${x}" y="${y}" text-anchor="${a}" ${extra}>${s}</text>`;
const MAJOR = '#d0d0d0', MINOR = '#ececec';
const snap = v => Math.floor(v) + .5;

function scope() {
  const el = document.getElementById('scope'), W = el.clientWidth, H = el.clientHeight;
  const L = 40, R = W - 26, T = 14, B = H - 32;
  const X = ms => L + (R - L) * ms / 3, Y = v => (T + B) / 2 - v * (B - T) / 30;
  let s = text((L + R) / 2, 11, 'Scope');
  for (let k = 1; k < 15; k++) s += line(snap(X(k * .2)), T, snap(X(k * .2)), B, k % 2 ? MINOR : MAJOR);
  for (let v = -14; v <= 14; v += 2) {
    s += line(L, snap(Y(v)), R, snap(Y(v)), MAJOR);
    s += text(L - 5, Y(v) + 4, v, 'end');
  }
  ['0', '400u', '800u', '1.2m', '1.6m', '2.0m', '2.4m', '2.8m'].forEach((t, k) => s += text(X(k * .4), B + 15, t));
  s += text((L + R) / 2, B + 27, 'Time (s)');
  s += text(0, 0, 'Instantaneous Level (V)', 'middle', `transform="translate(14 ${(T + B) / 2}) rotate(-90)"`);
  s += `<rect x="${snap(L)}" y="${snap(T)}" width="${R - L}" height="${B - T}" fill="none" stroke="#666"/>`;
  let d = '';
  for (let t = 0; t <= 3; t += .01) d += (d ? 'L' : 'M') + X(t).toFixed(1) + ' ' + Y(6.27 * Math.sin(2 * Math.PI * (t - .002))).toFixed(1);
  s += `<path d="${d}" fill="none" stroke="#6d6d9c"/><path d="${d}" fill="none" stroke="#a8364a"/>`;
  el.innerHTML = `<svg viewBox="0 0 ${W} ${H}">${s}</svg>`;
}

function fft() {
  const el = document.getElementById('fft'), W = el.clientWidth, H = el.clientHeight;
  const L = 47, R = W - 26, T = 14, B = H - 32;
  const X = f => L + (R - L) * Math.log10(f / 20) / 3, Y = v => T + (40 - v) * (B - T) / 200;
  let s = text((L + R) / 2, 11, 'FFT');
  const named = { 20: '20', 30: '30', 50: '50', 100: '100', 200: '200', 300: '300', 500: '500', 1000: '1k', 2000: '2k', 3000: '3k', 5000: '5k', 10000: '10k', 20000: '20k' };
  for (const dec of [10, 100, 1000, 10000]) for (let k = 1; k < 10; k++) {
    const f = dec * k;
    if (f <= 20 || f >= 20000) continue;
    s += line(snap(X(f)), T, snap(X(f)), B, named[f] ? MAJOR : MINOR);
  }
  for (const f in named) s += text(X(+f), B + 14, named[f]);
  for (let v = 40; v >= -160; v -= 10) {
    s += line(L, snap(Y(v)), R, snap(Y(v)), v % 20 ? MINOR : MAJOR);
    if (v % 20 === 0) s += text(L - 4, Y(v) + 4, v > 0 ? '+' + v : v, 'end');
  }
  s += text((L + R) / 2, B + 27, 'Frequency (Hz)');
  s += text(0, 0, 'Level (dBrA)', 'middle', `transform="translate(14 ${(T + B) / 2}) rotate(-90)"`);
  s += `<rect x="${snap(L)}" y="${snap(T)}" width="${R - L}" height="${B - T}" fill="none" stroke="#666"/>`;
  const peaks = [[180, -102], [300, -99], [1270, -104], [1640, -104], [2000, -88], [3000, -95], [4500, -105], [5000, -100], [5500, -104], [5900, -104], [7000, -103], [9000, -107], [15500, -107], [17000, -101], [19000, -104], [19600, -100]];
  const trace = (seed, color, hump) => {
    const rnd = () => (seed = (seed * 16807) % 2147483647) / 2147483647;
    let d = '', side = 1;
    for (let x = L, step; x <= R; x += step) {
      const p = (x - L) / (R - L);
      const dense = p > .5;
      step = p < .2 ? 5 : p < .32 ? 3 : p < .42 ? 2 : dense ? .5 : 1.200;
      const base = !dense ? -101 - 20 * p : p < .7 ? -112 : p < .84 ? -111 : -113.500;
      const amp = p < .3 ? 2.500 : p < .5 ? 3.500 : p < .7 ? 5 : 6;
      side = -side;
      const n = dense ? side * (.3 + .7 * rnd()) : rnd() * 2 - 1;
      const bump = Math.abs(x - X(hump)) < 3 ? 5 : 0;
      d += (d ? 'L' : 'M') + x.toFixed(1) + ' ' + Y(base + n * amp + bump).toFixed(1);
    }
    s += `<path d="${d}" fill="none" stroke="${color}"/>`;
  };
  trace(1234, '#4a629c', 78);
  trace(9876, '#b9323c', 110);
  for (const [f, v] of peaks) s += line(X(f), Y(v), X(f), Y(-110), '#a82c38');
  s += `<path d="M${X(1000) - 1} ${Y(-108)}L${X(1000)} ${Y(13)}h1L${X(1000) + 2} ${Y(-108)}z" fill="#a3303f"/>`;
  el.innerHTML = `<svg viewBox="0 0 ${W} ${H}">${s}</svg>`;
}

const METERS = [
  { title: 'RMS Level', unit: 'W', show: 'W', v: ['5.086', '5.169'], fill: 77.4, range: [[0, 90.400], [0, 90.400]] },
  { title: 'THD+N Ratio', unit: '%', show: '%', v: ['0.004420', '0.004423'], fill: 27.600, range: [[25, 99.500], [25, 99.500]] },
  { title: 'Frequency', unit: 'Hz', show: 'kHz', v: ['1.00000', '1.00000'], fill: 56.700, range: [[0, 95], [0, 97.700]] },
  { title: 'SINAD', unit: 'dB', show: 'dB', v: ['87.091', '87.086'], fill: 72.500, range: [[0, 75], [0, 75]] }
];
function meters() {
  document.getElementById('meters').innerHTML = METERS.map(m => `<article class="meter"><header><h3>${m.title}</h3><select class="flat" aria-label="${m.title} unit"><option>${m.unit}</option></select><button class="ic" aria-label="Graph"><svg><use href="#graph"/></svg></button><i class="tri"></i><button class="ic" aria-label="Settings"><svg><use href="#gear"/></svg></button><span class="grow"></span><i class="sep"></i><svg class="popi"><use href="#pop"/></svg><svg class="x"><use href="#close"/></svg></header>` +
    m.v.map((v, i) => `<div class="ch"><div class="name">Ch${i + 1}<i></i></div><div class="disp"><div class="val"><span>${v}</span><span>${m.show}</span></div><div class="track"><div class="fill" style="width:${m.fill}%"></div><div class="range" style="left:${m.range[i][0]}%;width:${m.range[i][1] - m.range[i][0]}%"></div></div></div></div>`).join('') + '</article>').join('') + '<div class="drop"></div>';
}
const draw = () => { scope(); fft(); };
meters();
draw();
addEventListener('resize', draw);
```
